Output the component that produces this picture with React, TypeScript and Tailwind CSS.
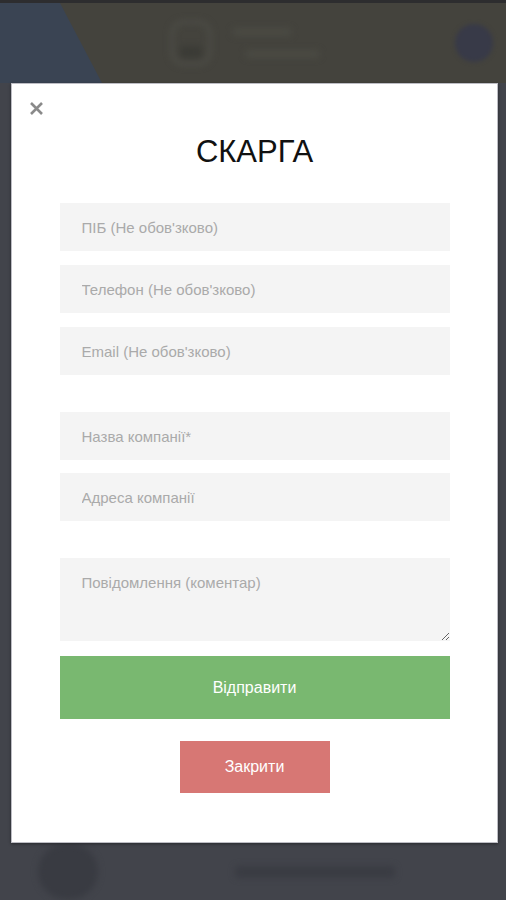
import React from "react";

const font = { fontFamily: '"Liberation Sans", Arial, sans-serif' };

function Field({ label }: { label: string }) {
  return (
    <input
      placeholder={label}
      className="block h-[48px] w-full bg-[#f4f4f4] pl-[22px] text-[15px] text-[#555] outline-none placeholder:text-[#aaaaaa]"
      style={font}
    />
  );
}

export default function App() {
  return (
    <div className="relative flex h-[900px] w-[506px] flex-col overflow-hidden bg-[#42444b]" style={font}>
      {/* background page header */}
      <header className="relative flex h-[83px] w-full shrink-0 items-center border-t-[3px] border-[#2d2d2f] bg-[#44433d] pl-[170px] pr-[13px]">
        <svg className="absolute left-0 top-0" width="110" height="80" viewBox="0 0 110 80">
          <polygon points="0,0 60,0 102,80 0,80" fill="#3a4453" />
        </svg>
        <div className="relative flex items-center gap-[20px] blur-[3px]">
          <div className="flex h-[46px] w-[42px] items-end justify-center rounded-[14px] border-[4px] border-[#4c4c46] pb-[4px]">
            <div className="h-[12px] w-[22px] rounded bg-[#3b3b36]" />
          </div>
          <div className="flex flex-col gap-[14px]">
            <div className="h-[8px] w-[60px] rounded bg-[#4a4a43]" />
            <div className="ml-[13px] h-[8px] w-[75px] rounded bg-[#4a4a43]" />
          </div>
        </div>
        <div className="relative ml-auto h-[38px] w-[38px] rounded-full bg-[#383a48] blur-[2px]" />
      </header>
      <main className="flex-1" />
      {/* background page bottom */}
      <footer className="flex h-[57px] shrink-0 items-center gap-[137px] pl-[38px] blur-[3px]">
        <div className="h-[55px] w-[60px] rounded-full bg-[#393b42]" />
        <div className="h-[12px] w-[160px] rounded bg-[#3a3c43]" />
      </footer>

      {/* modal overlay */}
      <div className="absolute inset-0 pl-[11px] pr-[8px] pt-[83px]">
        <div className="relative flex h-[760px] w-full flex-col items-center border border-[#bdbdc4] bg-white shadow-[0_1px_3px_rgba(0,0,0,0.4)]">
          <button className="absolute left-[16px] top-[16px] flex h-[16px] w-[16px] items-center justify-center">
            <svg width="15" height="15" viewBox="0 0 15 15">
              <path d="M2 2 L13 13 M13 2 L2 13" stroke="#8a8a8a" strokeWidth="2.6" strokeLinecap="butt" />
            </svg>
          </button>
          <h1 className="mt-[50px] h-[36px] text-[31px] font-normal leading-[36px] text-[#111]" style={font}>
            СКАРГА
          </h1>
          <form className="mt-[33px] flex w-[390px] flex-col gap-[37px]">
            <div className="flex flex-col gap-[14px]">
              <Field label="ПІБ (Не обов'зково)" />
              <Field label="Телефон (Не обов'зково)" />
              <Field label="Email (Не обов'зково)" />
            </div>
            <div className="flex flex-col gap-[13px]">
              <Field label="Назва компанії*" />
              <Field label="Адреса компанії" />
            </div>
            <div className="flex flex-col items-center">
              <textarea
                placeholder="Повідомлення (коментар)"
                className="block h-[83px] w-full bg-[#f4f4f4] px-[22px] pt-[14px] text-[15px] text-[#555] outline-none placeholder:text-[#aaaaaa]"
                style={font}
              />
              <button
                type="button"
                className="mt-[15px] flex h-[63px] w-full items-center justify-center bg-[#79b870] text-[16px] text-white"
                style={font}
              >
                Відправити
              </button>
              <button
                type="button"
                className="mt-[22px] flex h-[52px] w-[150px] items-center justify-center bg-[#d77774] text-[16px] text-white"
                style={font}
              >
                Закрити
              </button>
            </div>
          </form>
        </div>
      </div>
    </div>
  );
}
